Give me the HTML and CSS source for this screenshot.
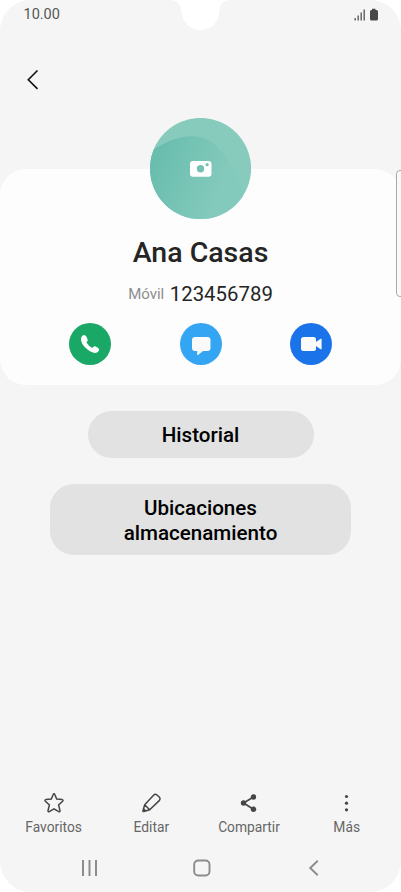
FILE: index.html
```html
<!DOCTYPE html>
<html lang="es">
<head>
<meta charset="utf-8">
<title>Contacto</title>
<link rel="stylesheet" href="styles.css">
</head>
<body>
<main class="phone">
  <svg class="notch" width="60" height="31" viewBox="0 0 60 31"><path d="M0 0C7 0 11 4 11.500 11C12 22 20 30 30.500 30S49 22 49.500 11C50 4 54 0 60 0Z" fill="#fff"/></svg>
  <header class="status">
    <span class="clock">10.00</span>
    <svg width="26" height="14" viewBox="0 0 26 14"><g stroke="#666" stroke-width="1.500"><path d="M2.200 10v2.500M5.200 7.500v5M8.200 4.500v8M11.200 1.500v11"/></g><path d="M19 .8h3.500v1.200h1q1.500 0 1.500 1.500v7.500q0 1.500-1.500 1.500h-5q-1.500 0-1.500-1.500V3.500Q17 2 18.500 2h.5z" fill="#484848"/></svg>
  </header>
  <nav class="top">
    <svg width="14" height="22" viewBox="0 0 14 22"><path d="M11.500 1.500L2.300 10.700L11.500 19.900" fill="none" stroke="#111" stroke-width="1.600"/></svg>
  </nav>
  <section class="card">
    <svg class="avatar" width="102" height="102" viewBox="0 0 102 102">
      <defs>
        <linearGradient id="hill" x1="0" y1=".3" x2=".9" y2=".6"><stop offset="0" stop-color="#68bdad"/><stop offset=".85" stop-color="#84cabc"/></linearGradient>
        <clipPath id="disc"><circle cx="50.500" cy="50.500" r="50.600"/></clipPath>
      </defs>
      <g clip-path="url(#disc)"><path d="M0 0h102v102H0z" fill="#87cbbd"/><path d="M0 34C22 18 48 12 64 26C75 35 84 51 90 65L98 102H0Z" fill="url(#hill)"/></g>
      <rect x="40" y="43" width="21.500" height="15.700" rx="3" fill="#fff"/><circle cx="50.500" cy="50.700" r="3.700" fill="#75c2b3"/><circle cx="57.100" cy="46.700" r="1.600" fill="#75c2b3"/>
    </svg>
    <h1 class="name">Ana Casas</h1>
    <p class="phone-line"><span class="kind">Móvil</span><span class="number">123456789</span></p>
    <div class="actions">
      <svg width="42" height="42" viewBox="0 0 42 42"><circle cx="21" cy="21" r="21" fill="#19a866"/><path d="M13.500 12.500Q16 11 17.300 13.500L18.700 16.500Q19 18 17.400 19.200Q19.500 23 23.300 25Q24.500 22.900 26.200 23.300L29.200 24.900Q31 26 29.700 28Q27.500 31 23.300 29.300C17 26.500 12.400 21.500 12 16.500Q11.900 14 13.500 12.500Z" fill="#fff"/></svg>
      <svg width="42" height="42" viewBox="0 0 42 42"><circle cx="21" cy="21" r="21" fill="#34a5f3"/><path d="M15 14h12.500q3 0 3 3v8q0 3-3 3h-4.500l-5 4q-.8.500-.8-.5V28H15q-3 0-3-3v-8q0-3 3-3z" fill="#fafafa"/></svg>
      <svg width="42" height="42" viewBox="0 0 42 42"><circle cx="21" cy="21" r="21" fill="#1a73e8"/><rect x="11" y="14" width="15" height="14" rx="2.500" fill="#fafafa"/><path d="M26 19l4.700-3.200q.9-.4.900.5v9.500q0 .9-.9.500L26 23z" fill="#fafafa"/></svg>
    </div>
  </section>
  <div class="edge"></div>
  <button class="pill history">Historial</button>
  <button class="pill storage">Ubicaciones<br>almacenamiento</button>
  <footer class="bottom">
    <div class="tools">
      <div class="tool"><svg width="22" height="22" viewBox="0 0 22 22"><path d="M11 1.800Q11.600 1.800 11.900 2.700L13.700 7L19.200 7.600Q20.700 8 19.600 9.300L15.600 13L17 18.500Q17.100 20.200 15.700 19.600L11 16.900L6.300 19.600Q4.900 20.200 5 18.500L6.400 13L2.400 9.300Q1.300 8 2.800 7.600L8.300 7L10.100 2.700Q10.400 1.800 11 1.800Z" fill="none" stroke="#454545" stroke-width="1.500"/></svg><span>Favoritos</span></div>
      <div class="tool"><svg width="22" height="22" viewBox="0 0 22 22"><path d="M13.800 3Q15.200 1.500 17 3L19.500 5.300Q20.700 6.800 19.500 8.400L9.700 17.800L3.700 19.500Q2.700 19.500 3 18.500L4.700 12.800ZM4.700 12.800L9.700 17.800" fill="none" stroke="#454545" stroke-width="1.500" stroke-linejoin="round"/><path d="M3.800 16l2.800 2.800-3.500 1z" fill="#454545"/></svg><span>Editar</span></div>
      <div class="tool"><svg width="22" height="22" viewBox="0 0 22 22"><path d="M15.500 5L5.500 11L15.500 17.300" fill="none" stroke="#454545" stroke-width="1.700"/><g fill="#454545"><circle cx="15.500" cy="5" r="2.700"/><circle cx="5.500" cy="11" r="2.700"/><circle cx="15.500" cy="17.300" r="2.700"/></g></svg><span>Compartir</span></div>
      <div class="tool"><svg width="22" height="22" viewBox="0 0 22 22"><g fill="#454545"><circle cx="10.500" cy="4.500" r="1.600"/><circle cx="10.500" cy="11.200" r="1.600"/><circle cx="10.500" cy="17.800" r="1.600"/></g></svg><span>Más</span></div>
    </div>
    <div class="system">
      <svg width="18" height="18" viewBox="0 0 18 18"><path d="M3 1v16M9.500 1v16M16 1v16" stroke="#8c8c8c" stroke-width="2"/></svg>
      <svg width="18" height="18" viewBox="0 0 18 18"><rect x="1.200" y="1.500" width="15.300" height="15" rx="4" fill="none" stroke="#8c8c8c" stroke-width="1.900"/></svg>
      <svg width="18" height="18" viewBox="0 0 18 18"><path d="M12.800 1.700L5.200 9L12.800 16.300" fill="none" stroke="#8c8c8c" stroke-width="1.900"/></svg>
    </div>
  </footer>
</main>
</body>
</html>
```
FILE: styles.css
```css
* { box-sizing: border-box; }
body { margin: 0; background: #fff; font-family: Roboto, sans-serif; }
svg { display: block; flex: none; }
.phone { position: relative; width: 401px; height: 892px; display: flex; flex-direction: column; align-items: center; background: #f5f5f5; border-radius: 31px; overflow: hidden; }
.notch { position: absolute; top: 0; left: 170px; }
.status { width: 100%; height: 29px; padding: 0 22px 0 23.5px; display: flex; align-items: center; justify-content: space-between; }
.clock { font-size: 14.5px; line-height: 20px; color: #555; }
.top { width: 100%; height: 140px; padding: 40px 26px; }
.card { width: 401px; height: 216px; flex: none; display: flex; flex-direction: column; align-items: center; background: #fdfdfd; border-radius: 26px; }
.avatar { margin-top: -51px; }
.name { margin: 15px 0 0; font-size: 28.5px; line-height: 36px; font-weight: 500; color: #252525; }
.phone-line { margin: 9px 0 0; height: 28px; display: flex; align-items: flex-start; gap: 5.5px; line-height: 28px; }
.kind { font-size: 15px; color: #8e8e8e; }
.number { font-size: 20.4px; color: #252525; }
.actions { width: 263px; margin-top: 15px; display: flex; justify-content: space-between; }
.edge { position: absolute; top: 170px; right: -5px; width: 10px; height: 127px; border: 1px solid #aaa; border-radius: 4px; background: #f9f9f9; }
.pill { flex: none; padding: 2px 0 0; border: 0; background: #e2e2e2; color: #000; font: 500 20.6px/25px Roboto, sans-serif; }
.history { width: 226px; height: 47px; margin-top: 26px; border-radius: 24px; }
.storage { width: 301px; height: 71px; margin-top: 26px; border-radius: 24px; }
.bottom { width: 100%; margin-top: auto; }
.tools { display: grid; grid-template-columns: repeat(4, 97.7px); padding-left: 4.8px; }
.tool { display: flex; flex-direction: column; align-items: center; gap: 4px; font-size: 13.8px; line-height: 18px; color: #666; }
.system { display: flex; justify-content: space-between; padding: 23px 78px 15px 80px; }
```
